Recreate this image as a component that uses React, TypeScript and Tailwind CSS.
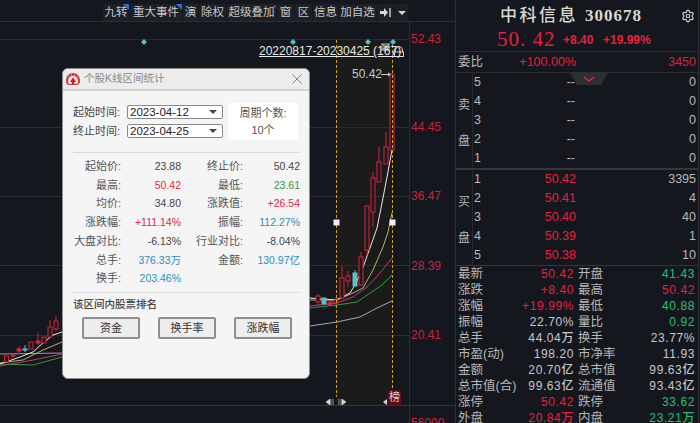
import { Settings } from "lucide-react";

const cjk = '"Liberation Sans","Noto Sans CJK SC",sans-serif';

const tools: { t: string; w: string; corner?: boolean; dot?: boolean }[] = [
  { t: "九转", w: "w-[26px]", corner: true },
  { t: "重大事件", w: "w-[52px]", corner: true },
  { t: "演", w: "w-[15px]" },
  { t: "除权", w: "w-[27px]" },
  { t: "超级叠加", w: "w-[49px]", dot: true },
  { t: "窗", w: "w-[17px]" },
  { t: "区", w: "w-[17px]" },
  { t: "信息", w: "w-[25px]" },
  { t: "加自选", w: "w-[37px]" },
];

type C = { x: number; o: number; c: number; h?: number; l?: number; k?: "r" | "f" | "b" };
const candles: C[] = [
  { x: 6.5, o: 356, c: 362, k: "r" },
  { x: 13, o: 355, c: 356, h: 353, l: 358, k: "f" },
  { x: 19, o: 349, c: 351, h: 346, l: 354, k: "f" },
  { x: 25, o: 349, c: 350, h: 345, l: 352, k: "b" },
  { x: 31, o: 342, c: 349, k: "r" },
  { x: 38, o: 341, c: 343, h: 333, l: 345, k: "f" },
  { x: 44, o: 337, c: 343, k: "r" },
  { x: 50, o: 327, c: 337, h: 320, k: "r" },
  { x: 56, o: 321, c: 329, h: 316, l: 331, k: "r" },
  { x: 318, o: 296, c: 302, h: 294, l: 306, k: "r" },
  { x: 324, o: 298, c: 304, k: "b" },
  { x: 330, o: 302, c: 305, k: "f" },
  { x: 336, o: 300, c: 303, h: 297, l: 307, k: "r" },
  { x: 342, o: 278, c: 298, h: 266, k: "r" },
  { x: 348, o: 276, c: 281, h: 271, l: 287, k: "r" },
  { x: 355, o: 273, c: 286, h: 270, k: "b" },
  { x: 361, o: 257, c: 285, h: 252, k: "r" },
  { x: 367, o: 206, c: 250, h: 206, l: 255, k: "r" },
  { x: 373, o: 178, c: 212, h: 172, l: 227, k: "r" },
  { x: 379, o: 162, c: 182, h: 147, k: "r" },
  { x: 386, o: 147, c: 164, h: 132, k: "r" },
  { x: 392, o: 74, c: 150, k: "r" },
];

const lines: { p: string; s: string }[] = [
  { p: "0,354 62,353", s: "#9a9a9a" },
  { p: "0,366 33,360 62,354", s: "#c43a78" },
  { p: "0,364 33,365 62,357", s: "#2f9a3c" },
  { p: "0,363 23,360 43,350 62,342", s: "#b5b36b" },
  { p: "0,364 20,357 33,352 43,343 53,335 62,332", s: "#e8e8e8" },
  { p: "310,326 337,322 360,317 377,308 392,301", s: "#a8a8a8" },
  { p: "310,308 337,305 357,302 370,293 382,285 392,275", s: "#2f9a3c" },
  { p: "310,306 337,303 353,297 367,287 380,273 392,258", s: "#c43a78" },
  { p: "310,300 337,300 353,293 363,288 373,270 383,247 388,232 392,213", s: "#b5b36b" },
  { p: "310,298 336,300 350,293 355,285 362,270 370,248 377,228 382,203 387,177 392,150", s: "#e8e8e8" },
];

const axis: { v: string; y: string }[] = [
  { v: "52.43", y: "top-[32px]" },
  { v: "44.45", y: "top-[120px]" },
  { v: "36.47", y: "top-[189px]" },
  { v: "28.39", y: "top-[259px]" },
  { v: "20.41", y: "top-[328px]" },
  { v: "56000", y: "top-[416px]" },
];

function Chart() {
  const red = "#d8233f";
  const cyan = "#5cc0cc";
  return (
    <svg className="absolute inset-0" width={456} height={423} viewBox="0 0 456 423">
      <rect x={336} y={39} width={56} height={366} fill="#1b1b1b" />
      {[39, 127, 196, 265, 335].map((y) => (
        <line key={y} x1={0} x2={409} y1={y + 0.5} y2={y + 0.5} stroke="#2b2d31" />
      ))}
      <line x1={0} x2={456} y1={405.5} y2={405.5} stroke="#34363a" />
      <line x1={409.5} x2={409.5} y1={22} y2={423} stroke="#2b2d31" />
      {lines.map((l, i) => (
        <polyline key={i} points={l.p} fill="none" stroke={l.s} strokeWidth={1} />
      ))}
      {candles.map((c, i) => {
        const col = c.k === "b" ? cyan : red;
        return (
          <g key={i}>
            {c.h !== undefined && <line x1={c.x} x2={c.x} y1={c.h} y2={c.o} stroke={col} />}
            {c.l !== undefined && <line x1={c.x} x2={c.x} y1={c.c} y2={c.l} stroke={col} />}
            <rect
              x={c.x - 2}
              y={c.o}
              width={4}
              height={c.c - c.o}
              fill={c.k === "r" ? "#1b1a1c" : col}
              stroke={col}
            />
          </g>
        );
      })}
      <line x1={336.5} x2={336.5} y1={40} y2={397} stroke="#d9a21b" strokeDasharray="3 2" />
      <line x1={392.5} x2={392.5} y1={40} y2={397} stroke="#d9a21b" strokeDasharray="3 2" />
      <rect x={333.5} y={219.5} width={6} height={6} fill="#eee" />
      <rect x={389.5} y={219.5} width={6} height={6} fill="#eee" />
      {[144, 293, 368, 393].map((x) => (
        <path key={x} d={`M${x} 39l3 3-3 3-3-3z`} fill="#4fc0c8" />
      ))}
      <rect x={381} y={43} width={9} height={8} fill="#6a6a6a" />
      <path d="M382 44l7 6M389 44l-7 6" stroke="#ddd" strokeWidth={0.8} />
      <path d="M395.5 52v-2a3.5 3.5 0 0 1 7 0v2" fill="none" stroke="#cfcfcf" />
      <rect x={394.5} y={52} width={9} height={4.5} fill="none" stroke="#cfcfcf" />
      <path d="M381 74.5h8" stroke="#c8c8c8" />
      <path d="M391 74.5l-3-2v4z" fill="#c8c8c8" />
      <path d="M326 402l4-3v6zM333 399v6M331 399v6M339 399v6M341 399v6M346 402l-4-3v6z" fill="#d8d8d8" stroke="#d8d8d8" strokeWidth={0.6} />
      <path d="M383 402l4-3v6zM401 400h-4l2 3z" fill="#d8d8d8" />
    </svg>
  );
}

function Stat({ l, v, c }: { l: string; v: string; c: string }) {
  return (
    <>
      <span className="whitespace-nowrap text-right text-[11px] text-[#555]">{l}:</span>
      <span className={`whitespace-nowrap text-right ${c}`}>{v}</span>
    </>
  );
}

function Select({ v }: { v: string }) {
  return (
    <div className="flex h-[14px] w-[96px] items-center justify-between rounded-[2px] border border-[#8a8a8a] bg-white pl-[2px] pr-[5px] text-[11.5px] text-[#222]">
      <span>{v}</span>
      <span className="h-0 w-0 border-x-[4px] border-t-[4px] border-x-transparent border-t-[#444]" />
    </div>
  );
}

function Btn({ t }: { t: string }) {
  return (
    <div className="flex h-[22px] w-[58px] items-center justify-center rounded-[2px] border-2 border-[#8f8f8f] bg-[#eeeeee] text-[11px] text-[#333]">
      {t}
    </div>
  );
}

function Modal() {
  const blue = "text-[#2c8fc0]";
  const dark = "text-[#444]";
  const redT = "text-[#f0243c]";
  const grn = "text-[#2f9a4c]";
  return (
    <div className="absolute left-[62px] top-[68px] flex h-[311px] w-[248px] flex-col overflow-hidden rounded-[6px] border border-[#8d8d8d] bg-[#f5f5f5]">
      <div className="flex h-[22px] shrink-0 items-center border-b-2 border-[#d4d4d4] bg-[#ececec] pl-[2px] pr-[5px]">
        <svg width={16} height={14} viewBox="0 0 16 14" className="mr-[3px]">
          <path d="M1 9C1 4 4 1 8 1s7 3 7 8c0 3-2 4-4 4H4c-2 0-3-2-3-4z" fill="#d23a3a" />
          <path d="M3 10C3 6 5 4 8 4s5 2 5 6c0 1-1 2-2 2H5c-1 0-2-1-2-2z" fill="#f6eaea" />
          <path d="M8 5.5l3 4.5H9l.5 2h-3l.5-2H5z" fill="#d01818" />
          <path d="M3.5 4.5l1 1M6.5 2.5l.4 1.2M10 2.7l-.4 1.1M12.6 4.6l-1 1" stroke="#fff" strokeWidth={0.8} />
        </svg>
        <span className="text-[10.5px] text-[#888]">个股K线区间统计</span>
        <svg width={10} height={10} viewBox="0 0 10 10" className="ml-auto mr-[2px]">
          <path d="M0.5 0.5l9 9M9.5 0.5l-9 9" stroke="#888" />
        </svg>
      </div>
      <div className="flex shrink-0 items-start gap-[5px] pl-[10px] pt-[14px]">
        <div className="flex flex-col gap-[5px] text-[11px] leading-[14px] text-[#444]">
          <div className="flex items-center gap-[6px]">
            <span className="w-[48px] whitespace-nowrap">起始时间:</span>
            <Select v="2023-04-12" />
          </div>
          <div className="flex items-center gap-[6px]">
            <span className="w-[48px] whitespace-nowrap">终止时间:</span>
            <Select v="2023-04-25" />
          </div>
        </div>
        <div className="-mt-[2px] flex h-[37px] w-[70px] flex-col items-center justify-center gap-[2px] bg-white text-[11px] leading-[15px] text-[#555]">
          <span>周期个数:</span>
          <span>10个</span>
        </div>
      </div>
      <div className="mx-[10px] mt-[12px] h-px shrink-0 bg-[#d8d8d8]" />
      <div className="ml-[10px] mr-[9px] mt-[4px] grid shrink-0 grid-cols-[48px_60px_62px_57px] text-[10.5px] leading-[18.7px]">
        <Stat l="起始价" v="23.88" c={dark} />
        <Stat l="终止价" v="50.42" c={dark} />
        <Stat l="最高" v="50.42" c={redT} />
        <Stat l="最低" v="23.61" c={grn} />
        <Stat l="均价" v="34.80" c={dark} />
        <Stat l="涨跌值" v="+26.54" c={redT} />
        <Stat l="涨跌幅" v="+111.14%" c={redT} />
        <Stat l="振幅" v="112.27%" c={blue} />
        <Stat l="大盘对比" v="-6.13%" c={dark} />
        <Stat l="行业对比" v="-8.04%" c={dark} />
        <Stat l="总手" v="376.33万" c={blue} />
        <Stat l="金额" v="130.97亿" c={blue} />
        <Stat l="换手" v="203.46%" c={blue} />
      </div>
      <div className="mx-[10px] mt-[4px] h-px shrink-0 bg-[#d8d8d8]" />
      <div className="ml-[10px] mt-[3px] shrink-0 text-[10.5px] font-medium leading-[16px] text-[#444]">该区间内股票排名</div>
      <div className="ml-[19px] mt-[5px] flex shrink-0 gap-[18px]">
        <Btn t="资金" />
        <Btn t="换手率" />
        <Btn t="涨跌幅" />
      </div>
    </div>
  );
}

function Book({ side, rows }: { side: [string, string]; rows: [string, string, string][] }) {
  return (
    <div className="flex h-[95px] shrink-0">
      <div className="flex w-[17px] flex-col items-center justify-center gap-[22px] border-r border-[#26282c] pt-[4px] text-[12px] leading-[14px] text-[#b8b8b8]">
        <span>{side[0]}</span>
        <span>{side[1]}</span>
      </div>
      <div className="flex-1">
        {rows.map((r) => (
          <div key={r[0]} className="grid h-[19px] grid-cols-[18px_84px_1fr] items-center pl-[1px] pr-[2px] text-[12.5px]">
            <span className="text-[#b8b8b8]">{r[0]}</span>
            <span className={r[1] === "--" ? "pr-[1px] text-right text-[#b8b8b8]" : "text-right text-[#e6213f]"}>{r[1]}</span>
            <span className="text-right text-[#b8b8b8]">{r[2]}</span>
          </div>
        ))}
      </div>
    </div>
  );
}

const stats: [string, string, string, string, string, string][] = [
  ["最新", "50.42", "r", "开盘", "41.43", "g"],
  ["涨跌", "+8.40", "r", "最高", "50.42", "r"],
  ["涨幅", "+19.99%", "r", "最低", "40.88", "g"],
  ["振幅", "22.70%", "w", "量比", "0.92", "g"],
  ["总手", "44.04万", "w", "换手", "23.77%", "w"],
  ["市盈(动)", "198.20", "w", "市净率", "11.93", "w"],
  ["金额", "20.70亿", "w", "总市值", "99.63亿", "w"],
  ["总市值(合)", "99.63亿", "w", "流通值", "93.43亿", "w"],
  ["涨停", "50.42", "r", "跌停", "33.62", "g"],
  ["外盘", "20.84万", "r", "内盘", "23.21万", "g"],
];
const tone: Record<string, string> = { r: "text-[#e6213f]", g: "text-[#1fc26b]", w: "text-[#c8c8c8]" };

function Side() {
  return (
    <div className="relative flex h-[423px] w-[243px] shrink-0 flex-col overflow-hidden border-r border-[#2d2f33]">
      <div className="relative flex h-[52px] shrink-0 flex-col border-b border-[#2d2f33]">
        <div className="mt-[4px] flex h-[23px] items-center pl-[44px] text-[17px] font-medium text-[#d9d9cf]" style={{ fontFamily: '"Liberation Serif","Noto Sans CJK SC",serif' }}>
          <span className="w-[85px] tracking-[2.5px]">中科信息</span>
          <span className="font-bold tracking-[1px]">300678</span>
        </div>
        <div className="mt-[2px] flex h-[22px] items-center pl-[41px] text-[#e6213f]" style={{ fontFamily: '"Liberation Serif",serif' }}>
          <span className="w-[66px] text-[21px] tracking-[1px]">50. 42</span>
          <span className="w-[40px] text-[12px] font-bold" style={{ fontFamily: '"Liberation Sans",sans-serif' }}>+8.40</span>
          <span className="text-[12px] font-bold" style={{ fontFamily: '"Liberation Sans",sans-serif' }}>+19.99%</span>
        </div>
        <Settings size={14} className="absolute left-[225px] top-[9px] text-[#d0d0d0]" />
      </div>
      <div className="grid h-[21px] shrink-0 grid-cols-[54px_64px_1fr] items-center border-b border-[#2d2f33] pl-[2px] pr-[2px] text-[12.5px]">
        <span className="text-[#b8b8b8]">委比</span>
        <span className="text-right text-[#e6213f]">+100.00%</span>
        <span className="text-right text-[#d8233f]">3450</span>
      </div>
      <Book
        side={["卖", "盘"]}
        rows={[
          ["5", "--", "0"],
          ["4", "--", "0"],
          ["3", "--", "0"],
          ["2", "--", "0"],
          ["1", "--", "0"],
        ]}
      />
      <div className="h-[2px] shrink-0 bg-[#34363a]" />
      <Book
        side={["买", "盘"]}
        rows={[
          ["1", "50.42", "3395"],
          ["2", "50.41", "4"],
          ["3", "50.40", "40"],
          ["4", "50.39", "1"],
          ["5", "50.38", "10"],
        ]}
      />
      <div className="h-px shrink-0 bg-[#34363a]" />
      <div className="shrink-0 pl-[2px]">
        {stats.map((s) => (
          <div key={s[0]} className="grid h-[16px] grid-cols-[117px_120px] items-center text-[12.5px] leading-[16px]">
            <div className="flex justify-between pr-[1px]">
              <span className="whitespace-nowrap text-[#b8b8b8]">{s[0]}</span>
              <span className={`whitespace-nowrap text-[12px] font-medium tracking-[0.6px] ${tone[s[2]]}`}>{s[1]}</span>
            </div>
            <div className="flex justify-between pl-[3px]">
              <span className="whitespace-nowrap text-[#b8b8b8]">{s[3]}</span>
              <span className={`whitespace-nowrap text-[12px] font-medium tracking-[0.6px] ${tone[s[5]]}`}>{s[4]}</span>
            </div>
          </div>
        ))}
      </div>
      <svg className="absolute left-[114px] top-[73px]" width={40} height={13} viewBox="0 0 40 13">
        <path d="M0 0h38l-7 12H7z" fill="#2c2e32" />
        <path d="M14 4l5 4 5-4" fill="none" stroke="#e6213f" strokeWidth={1.6} />
      </svg>
    </div>
  );
}

export default function App() {
  return (
    <div className="flex h-[423px] w-[700px] overflow-hidden bg-[#14171d]" style={{ fontFamily: cjk }}>
      <div className="relative h-[423px] w-[456px] shrink-0 border-r border-[#2d2f33]">
        <Chart />
        <div className="relative flex h-[22px] items-start justify-end border-b border-[#2d2f33] pr-[47px] pt-[4px]">
          <div className="flex gap-px">
            {tools.map((b) => (
              <div key={b.t} className={`relative flex h-[17px] ${b.w} items-center justify-center bg-[#1d2025] text-[11.5px] text-[#c8c8c8]`}>
                {b.t}
                {b.corner && <span className="absolute right-0 top-0 h-0 w-0 border-l-[6px] border-t-[6px] border-l-transparent border-t-[#2a72e0]" />}
                {b.dot && <span className="absolute right-0 top-[1px] h-[3px] w-[3px] rounded-full bg-[#f01030]" />}
              </div>
            ))}
            <div className="flex h-[17px] w-[17px] items-center justify-center bg-[#1d2025]">
              <svg width={12} height={9} viewBox="0 0 12 9">
                <path d="M0 3h4V0l4 4.5L4 9V6H0z" fill="#d8d8d8" />
                <path d="M10 0v9" stroke="#d8d8d8" strokeWidth={1.4} />
              </svg>
            </div>
            <div className="flex h-[17px] w-[13px] items-center justify-center bg-[#1d2025]">
              <span className="h-0 w-0 border-x-[4px] border-t-[4px] border-x-transparent border-t-[#d8d8d8]" />
            </div>
          </div>
        </div>
        <span className="absolute left-[259px] top-[44px] text-[12px] leading-[14px] text-[#e8e8e8] underline">20220817-20230425 (167)</span>
        <span className="absolute left-[352px] top-[67px] text-[12px] leading-[14px] text-[#c8c8c8]">50.42</span>
        <span className="absolute left-[388px] top-[390px] flex h-[15px] w-[13px] items-center justify-center bg-[#5a0f14] text-[11px] text-[#e8d0d0]">榜</span>
        {axis.map((a) => (
          <span key={a.v} className={`absolute left-[411px] ${a.y} text-[12px] leading-[14px] text-[#c8253f]`}>{a.v}</span>
        ))}
        <Modal />
      </div>
      <Side />
    </div>
  );
}
